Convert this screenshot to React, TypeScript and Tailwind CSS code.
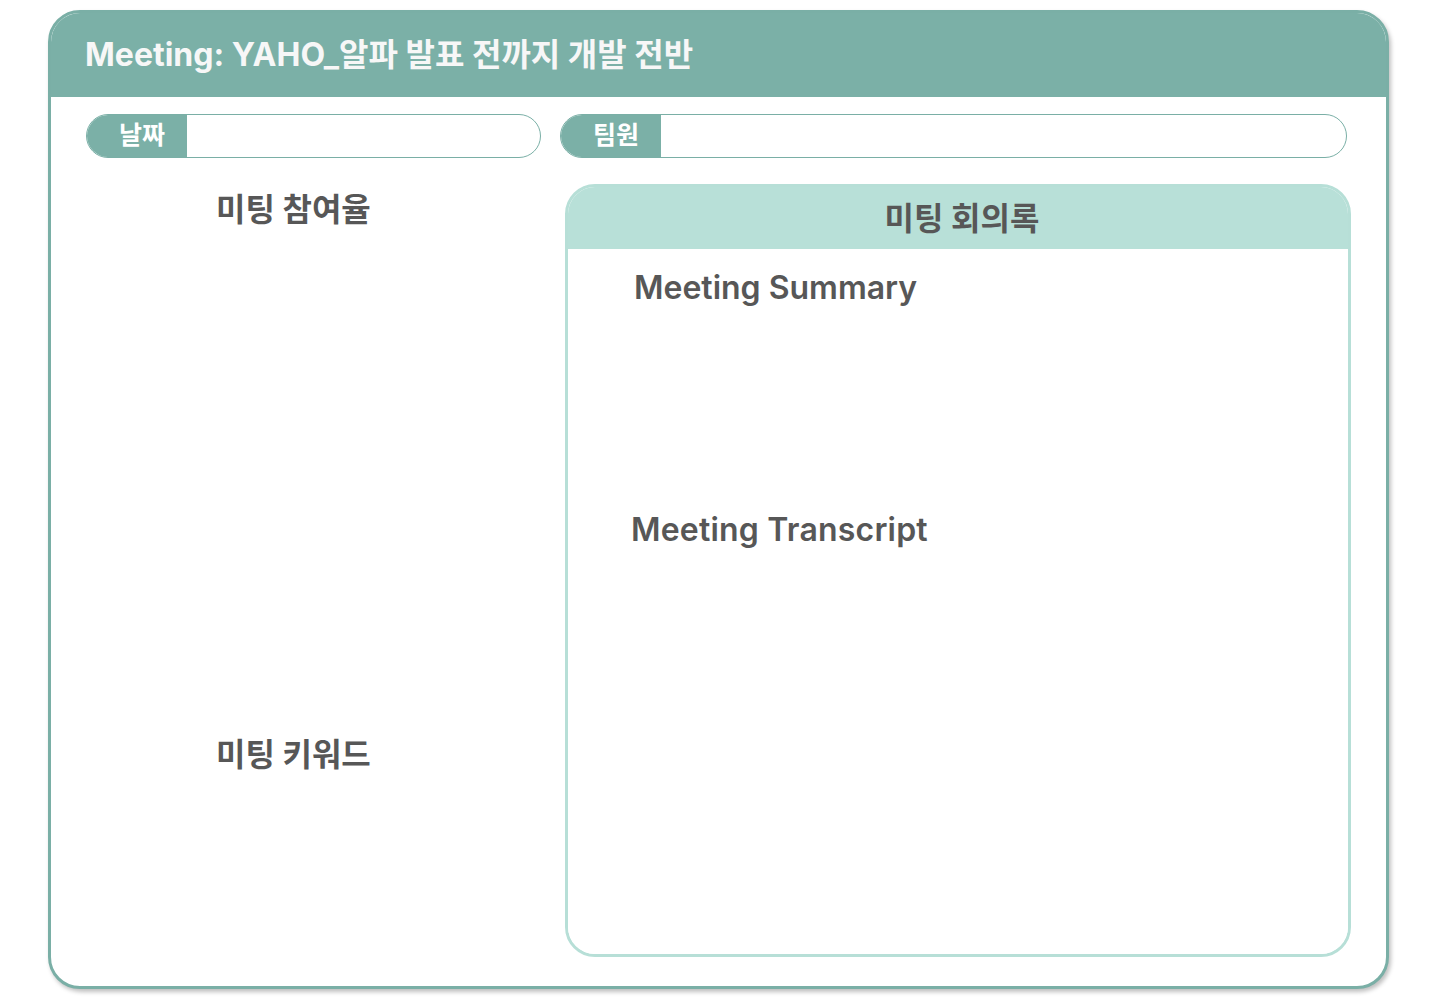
import React from "react";

const font = { fontFamily: '"Inter", "Noto Sans CJK KR", sans-serif' };

function Pill({ label, width }: { label: string; width: string }) {
  return (
    <div className={`${width} h-[44px] flex rounded-full border border-[#7aafa6] overflow-hidden bg-white`}>
      <div className="w-[100px] h-full bg-[#7bb0a7] flex items-center justify-center text-white text-[25px] font-bold pl-[10px]">
        {label}
      </div>
      <div className="flex-1" />
    </div>
  );
}

export default function App() {
  return (
    <div className="min-h-screen bg-white" style={font}>
      <div className="ml-[48px] pt-[10px]">
        {/* Meeting card */}
        <div className="w-[1341px] h-[979px] rounded-[32px] border-[3px] border-[#7aafa6] bg-white overflow-hidden shadow-[2px_3px_4px_rgba(0,0,0,0.25)] flex flex-col">
          <div className="h-[87px] bg-[#7bb0a7] flex items-center pl-[37px] -mt-[3px] -mx-[3px] pt-[3px]">
            <h1 className="text-[32px] font-bold text-[#f7f7f7]">
              Meeting: YAHO_알파 발표 전까지 개발 전반
            </h1>
          </div>

          <div className="flex gap-[19px] pl-[35px] pt-[17px]">
            <Pill label="날짜" width="w-[455px]" />
            <Pill label="팀원" width="w-[787px]" />
          </div>

          <div className="flex pl-[35px] pt-[26px]">
            {/* left column */}
            <div className="w-[479px] pl-[130px] flex flex-col">
              <h2 className="text-[32px] font-bold text-[#575757] leading-[38px] mt-[7px]">미팅 참여율</h2>
              <h2 className="text-[32px] font-bold text-[#575757] leading-[38px] mt-[507px]">미팅 키워드</h2>
            </div>

            {/* minutes card */}
            <div className="w-[786px] h-[773px] rounded-[30px] border-[3px] border-[#b7dfd7] overflow-hidden flex flex-col">
              <div className="h-[65px] bg-[#b8e0d8] flex items-center justify-center -mt-[3px] -mx-[3px] pt-[5px] pl-[8px]">
                <h2 className="text-[32px] font-bold text-[#575757]">미팅 회의록</h2>
              </div>
              <div className="flex-1 bg-white pt-[20px]">
                <h3 className="ml-[66px] text-[32px] font-semibold text-[#575757] leading-[38px]">Meeting Summary</h3>
                <h3 className="ml-[63px] mt-[204px] text-[32px] font-semibold text-[#575757] leading-[38px] tracking-[0.2px]">Meeting Transcript</h3>
              </div>
            </div>
          </div>
        </div>
      </div>
    </div>
  );
}
